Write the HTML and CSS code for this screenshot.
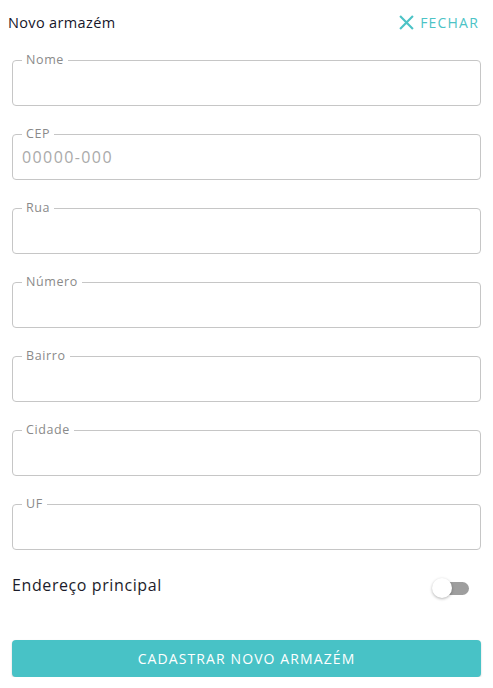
FILE: index.html
```html
<!DOCTYPE html>
<html lang="pt">
<head>
<meta charset="utf-8">
<link rel="stylesheet" href="styles.css">
</head>
<body>
<div class="page">
  <header class="header">
    <h1 class="title">Novo armazém</h1>
    <button class="close" type="button">
      <svg class="close-icon" viewBox="0 0 14 14" width="14" height="14"><path d="M1 1 L13 13 M13 1 L1 13" stroke="currentColor" stroke-width="2" fill="none"/></svg>
      <span>FECHAR</span>
    </button>
  </header>
  <form class="form">
    <fieldset class="field"><legend>Nome</legend><input class="input" type="text"></fieldset>
    <fieldset class="field"><legend>CEP</legend><input class="input" type="text" placeholder="00000-000"></fieldset>
    <fieldset class="field"><legend>Rua</legend><input class="input" type="text"></fieldset>
    <fieldset class="field"><legend>Número</legend><input class="input" type="text"></fieldset>
    <fieldset class="field"><legend>Bairro</legend><input class="input" type="text"></fieldset>
    <fieldset class="field"><legend>Cidade</legend><input class="input" type="text"></fieldset>
    <fieldset class="field"><legend>UF</legend><input class="input" type="text"></fieldset>
    <div class="switch-row">
      <span class="switch-label">Endereço principal</span>
      <span class="switch"><span class="switch-track"></span><span class="switch-thumb"></span></span>
    </div>
    <button class="submit" type="button">CADASTRAR NOVO ARMAZÉM</button>
  </form>
</div>
</body>
</html>
```
FILE: styles.css
```css
* { box-sizing: border-box; }
body {
  margin: 0;
  background: #ffffff;
  font-family: "Open Sans", "DejaVu Sans", sans-serif;
  color: #1c1c2a;
}
.page { padding: 0 15px 0 8px; }
.header {
  display: flex;
  align-items: center;
  justify-content: space-between;
  height: 45px;
}
.title {
  margin: 0;
  font-size: 14.5px;
  font-weight: 500;
  letter-spacing: 0.35px;
  color: #16162a;
}
.close {
  display: flex;
  align-items: center;
  gap: 6px;
  background: none;
  border: 0;
  padding: 0;
  color: #4cc3c6;
  font-family: inherit;
  font-size: 14px;
  font-weight: 500;
  letter-spacing: 1.2px;
  margin-right: -1px;
}
.close-icon { display: block; width: 15px; height: 15px; }
.form {
  display: flex;
  flex-direction: column;
  gap: 21px;
  padding: 8px 0 0 4px;
  margin-right: -3px;
}
.field {
  margin: 0;
  padding: 0 9px 6px;
  border: 1px solid #c6c6c6;
  border-radius: 4px;
  min-width: 0;
}
.field legend {
  padding: 0 4px;
  font-size: 12.5px;
  line-height: 14px;
  letter-spacing: 0.6px;
  color: #8a8a8a;
}
.input {
  display: block;
  width: 100%;
  height: 32px;
  border: 0;
  padding: 0;
  outline: none;
  font-family: inherit;
  font-size: 16px;
  letter-spacing: 1.4px;
  color: #333;
  background: transparent;
}
.input::placeholder { color: #aaaaaa; }
.switch-row {
  display: flex;
  align-items: center;
  justify-content: space-between;
  margin-top: -1px;
  height: 30px;
}
.switch-label { font-size: 16px; letter-spacing: 0.6px; color: #1c1c2a; }
.switch {
  position: relative;
  width: 37px;
  height: 20px;
  margin-top: 6px;
  margin-right: 12px;
}
.switch-track {
  position: absolute;
  left: 2px;
  top: 4px;
  width: 35px;
  height: 13px;
  border-radius: 7px;
  background: #9e9e9e;
}
.switch-thumb {
  position: absolute;
  left: 0;
  top: 0;
  width: 20px;
  height: 20px;
  border-radius: 50%;
  background: #fff;
  box-shadow: 0 1px 3px rgba(0,0,0,0.3);
}
.submit {
  margin-top: 19px;
  height: 37px;
  border: 0;
  border-radius: 4px;
  background: #48c2c6;
  color: #ffffff;
  font-family: inherit;
  font-size: 14px;
  font-weight: 500;
  letter-spacing: 1.1px;
  box-shadow: 0 1px 2px rgba(0,0,0,0.2);
}
```
